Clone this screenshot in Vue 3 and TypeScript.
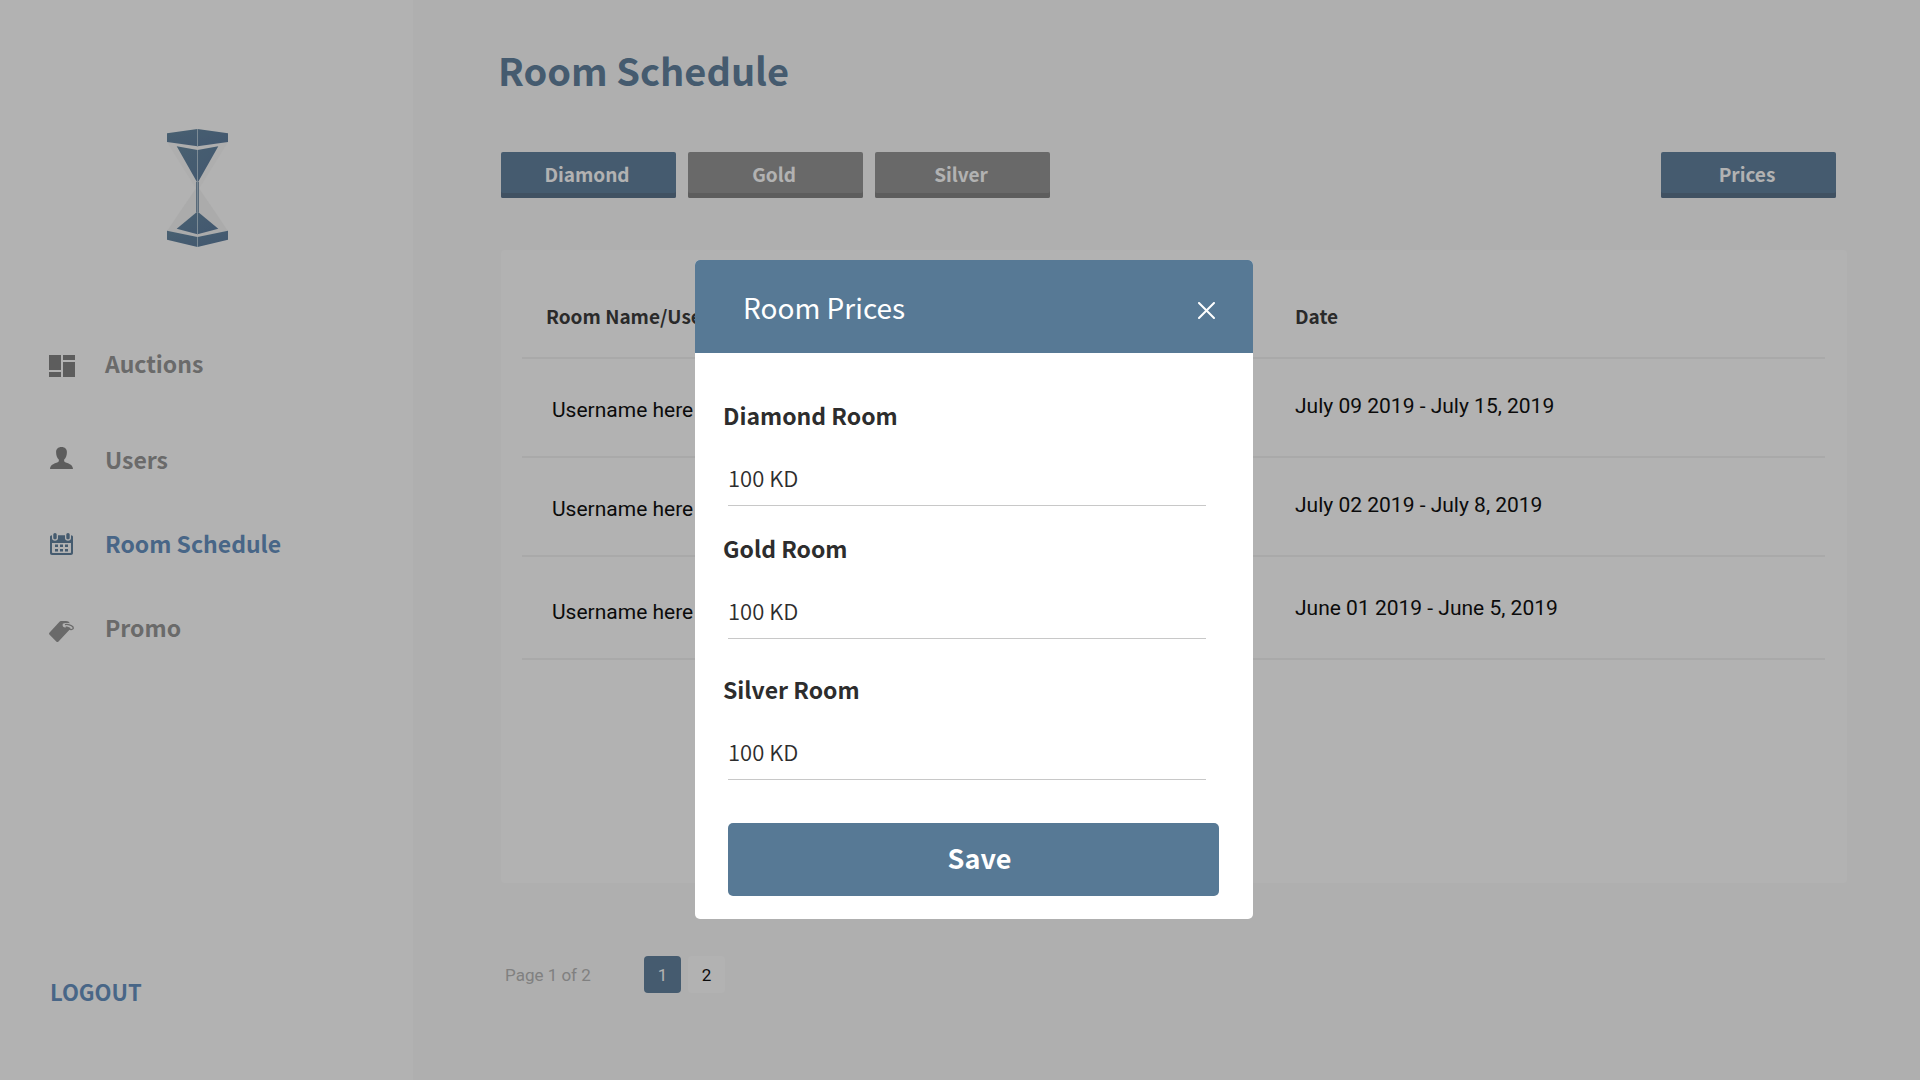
<script setup lang="ts">
import { ref } from 'vue'

interface Booking {
  user: string
  date: string
}

const navItems = [
  { id: 'auctions', label: 'Auctions' },
  { id: 'users', label: 'Users' },
  { id: 'schedule', label: 'Room Schedule' },
  { id: 'promo', label: 'Promo' },
]
const activeNav = 'schedule'

const tiers = ['Diamond', 'Gold', 'Silver']
const activeTier = ref('Diamond')

const bookings: Booking[] = [
  { user: 'Username here', date: 'July 09 2019 - July 15, 2019' },
  { user: 'Username here', date: 'July 02 2019 - July 8, 2019' },
  { user: 'Username here', date: 'June 01 2019 - June 5, 2019' },
]

const pages = [1, 2]
const currentPage = ref(1)

const modalOpen = ref(true)
const prices = ref([
  { id: 'diamond', label: 'Diamond Room', value: '100 KD' },
  { id: 'gold', label: 'Gold Room', value: '100 KD' },
  { id: 'silver', label: 'Silver Room', value: '100 KD' },
])
</script>

<template>
  <div class="app">
    <aside class="sidebar">
      <svg class="logo" viewBox="0 0 61 118" width="61" height="118" aria-hidden="true">
        <defs>
          <linearGradient id="steel" x1="0" y1="0" x2="1" y2="1">
            <stop offset="0" stop-color="#688aa2" />
            <stop offset="1" stop-color="#5f7da0" />
          </linearGradient>
        </defs>
        <path d="M0 13 30.500 62 61 13z" fill="#f9f9f9" />
        <path d="M0 102 30.500 57 61 102 30.500 108z" fill="#f5f5f5" />
        <path d="M0 4.300 30.500 0 61 4.300V13l-30.500 4.300L0 13z" fill="url(#steel)" />
        <path d="M9.700 17.300 30.500 21l20.800-3.700L30.500 54z" fill="url(#steel)" />
        <path d="M30.500 82.500 51.300 99.700 30.500 105.300 9.700 99.700z" fill="url(#steel)" />
        <path d="M0 101.700 30.500 108 61 101.700v9L30.500 118 0 110.700z" fill="url(#steel)" />
        <path d="M30.500 53v30" stroke="#8298ae" stroke-width="3" />
        <path d="M30.500 0v17.300M30.500 21v84M30.500 108v10" stroke="#b4c8d6" stroke-width="1" />
      </svg>

      <nav class="nav">
        <a
          v-for="item in navItems"
          :key="item.id"
          href="#"
          class="nav-item"
          :class="[item.id, { active: item.id === activeNav }]"
        >
          <svg class="nav-icon" viewBox="0 0 28 36" width="28" height="36" aria-hidden="true">
            <path
              v-if="item.id === 'auctions'"
              d="M1 10h12v15H1zM15 10h12v5H15zM1 27h12v5H1zM15 17h12v15H15z"
            />
            <path
              v-else-if="item.id === 'users'"
              d="M13.500 6c-3.600 0-5.400 2.200-5.400 5.200 0 3.200 1 5.800 2.700 7.400.3 1.600-.1 2.400-1.600 3C5 23 2.400 24.300 2 28h23c-.4-3.700-3-5-7.200-6.400-1.500-.6-1.900-1.400-1.600-3 1.700-1.600 2.700-4.200 2.700-7.400 0-3-1.800-5.200-5.400-5.200z"
            />
            <path
              v-else-if="item.id === 'schedule'"
              fill-rule="evenodd"
              d="M7 8c1.100 0 1.700.8 1.700 1.700v3c0 .9-.6 1.600-1.700 1.600s-1.700-.7-1.700-1.600v-3C5.300 8.800 5.900 8 7 8zM20 8c1.100 0 1.700.8 1.700 1.700v3c0 .9-.6 1.600-1.700 1.600s-1.700-.7-1.700-1.600v-3c0-.9.6-1.700 1.700-1.700zM2 12c0-1 .7-1.700 2-1.800v3c0 1.400 1.300 2.500 3 2.500s3-1.100 3-2.500v-3h7v3c0 1.400 1.300 2.500 3 2.500s3-1.100 3-2.500v-3c1.300.1 2 .8 2 1.800v16c0 1.200-.8 2-2 2H4c-1.200 0-2-.8-2-2zM4 18v9.300c0 .5.300.7.700.7h17.600c.4 0 .7-.2.700-.7V18zM7 19.600h3V22H7zM12 19.600h3V22h-3zM17 19.600h3V22h-3zM7 24h3v2.500H7zM12 24h3v2.500h-3zM17 24h3v2.500h-3z"
            />
            <g v-else>
              <path
                fill-rule="evenodd"
                d="M11.500 12.800c.4-.4.9-.7 1.500-.7h5c2 0 3 .9 3.800 2.200-2.500-.5-5.800-.4-7 .4-.8 1.900.6 4.100 2.800 3.900 1-.1 1.500-.5 1.900-1 .9.600 1.900 1 2.800 1.100 0 1-.3 1.700-1 2.400L10.500 32.400c-.7.7-1.500.7-2.200 0l-6.700-6.700c-.7-.7-.7-1.600 0-2.300z"
              />
              <path
                d="M17 15.700c2.500-.7 6.500.2 8 2.300.8 1.600-.2 2.700-2.200 2.500-1.700-.2-3.600-1-5-2.800"
                fill="none"
                stroke="currentColor"
                stroke-width="1.300"
              />
            </g>
          </svg>
          <span>{{ item.label }}</span>
        </a>
      </nav>

      <a href="#" class="logout">LOGOUT</a>
    </aside>

    <main class="main">
      <h1 class="title">Room Schedule</h1>

      <div class="toolbar">
        <button
          v-for="tier in tiers"
          :key="tier"
          type="button"
          class="btn"
          :class="{ primary: tier === activeTier }"
          @click="activeTier = tier"
        >
          {{ tier }}
        </button>
        <button type="button" class="btn primary prices" @click="modalOpen = true">Prices</button>
      </div>

      <section class="card">
        <table class="table">
          <thead>
            <tr>
              <th class="col-user" scope="col">Room Name/User</th>
              <th scope="col">Date</th>
            </tr>
          </thead>
          <tbody>
            <tr v-for="(row, i) in bookings" :key="i">
              <td class="cell-user">{{ row.user }}</td>
              <td class="cell-date">{{ row.date }}</td>
            </tr>
          </tbody>
        </table>
      </section>

      <footer class="pager">
        <span class="pager-text">Page 1 of 2</span>
        <button
          v-for="page in pages"
          :key="page"
          type="button"
          class="page"
          :class="{ current: page === currentPage }"
          @click="currentPage = page"
        >
          {{ page }}
        </button>
      </footer>
    </main>

    <div v-if="modalOpen" class="overlay">
      <form class="modal" role="dialog" aria-labelledby="modal-title" @submit.prevent="modalOpen = false">
        <header class="modal-head">
          <h2 id="modal-title" class="modal-title">Room Prices</h2>
          <button type="button" class="close" aria-label="Close" @click="modalOpen = false">
            <svg viewBox="0 0 17 17" width="17" height="17" aria-hidden="true">
              <path d="M1 1l15 15M16 1L1 16" stroke="#fff" stroke-width="2" stroke-linecap="round" />
            </svg>
          </button>
        </header>
        <div class="modal-body">
          <div v-for="price in prices" :key="price.id" class="field">
            <label :for="price.id">{{ price.label }}</label>
            <input :id="price.id" v-model="price.value" type="text" />
          </div>
          <button type="submit" class="save">Save</button>
        </div>
      </form>
    </div>
  </div>
</template>

<style>
body {
  margin: 0;
}
</style>

<style scoped>
.app {
  display: flex;
  min-height: 100vh;
  background: #fbfbfb;
  font-family: 'Noto Sans CJK JP', 'Noto Sans', sans-serif;
}

.app * {
  box-sizing: border-box;
}

button,
input {
  font-family: inherit;
  border: 0;
  padding: 0;
}

button {
  cursor: pointer;
}

/* Sidebar */
.sidebar {
  display: flex;
  flex: 0 0 413px;
  flex-direction: column;
  align-items: flex-start;
  padding: 129px 0 71px;
  background: #fff;
}

.logo {
  margin: 0 0 98px 167px;
}

.nav {
  display: flex;
  flex-direction: column;
  gap: 48px;
  padding-left: 48px;
}

.nav-item {
  display: flex;
  gap: 29px;
  color: #989898;
  font-size: 23px;
  font-weight: 700;
  line-height: 36px;
  text-decoration: none;
}

.nav-item.auctions {
  margin-bottom: 12px;
}

.nav-icon {
  flex: none;
  fill: currentColor;
}

.auctions .nav-icon,
.users .nav-icon {
  color: #868686;
}

.nav-item.active {
  color: #6892c2;
}

.active .nav-icon {
  color: #64839f;
}

.logout {
  margin: auto 0 0 50px;
  color: #6892c2;
  font-size: 22px;
  font-weight: 700;
  line-height: 36px;
  text-decoration: none;
}

/* Main column */
.main {
  flex: 1;
  min-width: 0;
  padding: 42px 73px 48px 88px;
}

.title {
  margin: 0 0 54px -3px;
  color: #64839f;
  font-size: 38px;
  font-weight: 700;
  line-height: 56px;
}

.toolbar {
  display: flex;
  gap: 12px;
  margin-bottom: 52px;
  padding-right: 11px;
}

.btn {
  width: 175px;
  height: 46px;
  padding: 0 3px 3px 0;
  border-radius: 2px;
  background: #979797;
  box-shadow: inset 0 -5px #868686;
  color: #fff;
  font-size: 19px;
  font-weight: 700;
  line-height: 36px;
}

.btn.primary {
  background: #64839f;
  box-shadow: inset 0 -5px #5c748d;
}

.prices {
  margin-left: auto;
}

.card {
  min-height: 633px;
  padding: 0 22px 0 21px;
  border-radius: 4px;
  background: #fff;
}

.table {
  width: 100%;
  border-collapse: separate;
  border-spacing: 0;
  table-layout: fixed;
  text-align: left;
}

.table th,
.table td {
  padding: 0;
  border-bottom: 2px solid #f2f2f2;
}

.table th {
  height: 109px;
  padding-top: 24px;
  color: #3d3d3d;
  font-size: 19px;
  font-weight: 700;
  line-height: 28px;
}

.table td {
  height: 99px;
  color: #111;
  font-family: Roboto, sans-serif;
  font-size: 21px;
  line-height: 28px;
}

.col-user {
  width: 773px;
}

.table th.col-user {
  padding-left: 24px;
}

.table td.cell-user {
  padding: 4px 0 0 30px;
}

.table td.cell-date {
  padding-bottom: 4px;
}

.table tr:last-child td {
  height: 103px;
}

.table tr:last-child .cell-user {
  padding-top: 8px;
}

.table tr:last-child .cell-date {
  padding-bottom: 0;
}

.pager {
  display: flex;
  align-items: center;
  gap: 7px;
  margin-top: 73px;
  padding-left: 4px;
  font-family: Roboto, sans-serif;
  font-size: 17px;
  line-height: 24px;
}

.pager-text {
  width: 132px;
  color: #b8b8b8;
}

.page {
  width: 37px;
  height: 37px;
  border-radius: 4px;
  background: #fff;
  color: #111;
  font-size: 17px;
}

.page.current {
  background: #64839f;
  color: #fff;
}

/* Dialog */
.overlay {
  position: fixed;
  inset: 0;
  display: flex;
  align-items: center;
  justify-content: center;
  padding: 99px 0 0 28px;
  background: rgba(0, 0, 0, 0.3);
}

.modal {
  width: 558px;
  overflow: hidden;
  border-radius: 5px;
  background: #fff;
}

.modal-head {
  display: flex;
  align-items: center;
  justify-content: space-between;
  height: 93px;
  padding: 0 33px 0 48px;
  background: #577995;
}

.modal-title {
  margin: 0;
  color: #fff;
  font-size: 28px;
  font-weight: 400;
  line-height: 40px;
}

.close {
  display: flex;
  padding: 12px 5px 5px;
  background: none;
}

.modal-body {
  display: flex;
  flex-direction: column;
  gap: 26px;
  padding: 46px 34px 23px 28px;
}

.field {
  display: flex;
  flex-direction: column;
}

.field:last-of-type {
  margin-top: 8px;
}

.field label {
  color: #2d2d2d;
  font-size: 23px;
  font-weight: 700;
  line-height: 32px;
}

.field input {
  width: 478px;
  height: 57px;
  margin: 18px 0 0 5px;
  border-bottom: 1px solid #c8c8c8;
  outline: 0;
  background: none;
  color: #2d2d2d;
  font-size: 22px;
  font-weight: 350;
}

.save {
  height: 73px;
  margin: 17px 0 0 5px;
  padding: 0 0 5px 12px;
  border-radius: 5px;
  background: #577995;
  color: #fff;
  font-size: 27px;
  font-weight: 700;
}
</style>
